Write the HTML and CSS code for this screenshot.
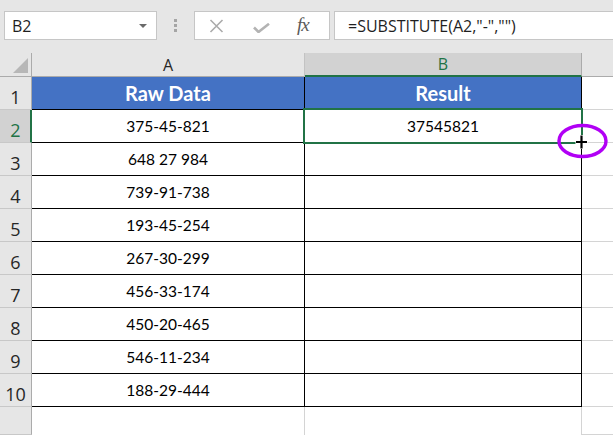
FILE: index.html
```html
<!DOCTYPE html>
<html>
<head>
<meta charset="utf-8">
<link rel="stylesheet" href="styles.css">
</head>
<body>
<div class="toolbar">
  <div class="namebox"><span>B2</span><i class="caret"></i></div>
  <div class="grip"><i></i><i></i><i></i></div>
  <div class="fxbox">
    <svg class="ico-x" width="15" height="14" viewBox="0 0 15 14"><path d="M1.5 1 L13.5 13 M13.5 1 L1.5 13" stroke="#ababab" stroke-width="1.6" fill="none"/></svg>
    <svg class="ico-ok" width="17" height="10" viewBox="0 0 17 10"><path d="M1 4.5 L5.5 9 L16 0.8" stroke="#b3b3b3" stroke-width="2.6" fill="none"/></svg>
    <span class="fx">fx</span>
  </div>
  <div class="formula">=SUBSTITUTE(A2,"-","")</div>
</div>
<div class="sheet">
  <div class="corner"><i></i></div>
  <div class="colh">A</div>
  <div class="colh sel">B</div>
  <div class="colh last"></div>

  <div class="rowh">1</div>
  <div class="cell head">Raw Data</div>
  <div class="cell head">Result</div>
  <div class="cell out"></div>

  <div class="rowh sel">2</div>
  <div class="cell">375-45-821</div>
  <div class="cell">37545821</div>
  <div class="cell out"></div>

  <div class="rowh">3</div>
  <div class="cell">648 27 984</div>
  <div class="cell"></div>
  <div class="cell out"></div>

  <div class="rowh">4</div>
  <div class="cell">739-91-738</div>
  <div class="cell"></div>
  <div class="cell out"></div>

  <div class="rowh">5</div>
  <div class="cell">193-45-254</div>
  <div class="cell"></div>
  <div class="cell out"></div>

  <div class="rowh">6</div>
  <div class="cell">267-30-299</div>
  <div class="cell"></div>
  <div class="cell out"></div>

  <div class="rowh">7</div>
  <div class="cell">456-33-174</div>
  <div class="cell"></div>
  <div class="cell out"></div>

  <div class="rowh">8</div>
  <div class="cell">450-20-465</div>
  <div class="cell"></div>
  <div class="cell out"></div>

  <div class="rowh">9</div>
  <div class="cell">546-11-234</div>
  <div class="cell"></div>
  <div class="cell out"></div>

  <div class="rowh">10</div>
  <div class="cell">188-29-444</div>
  <div class="cell"></div>
  <div class="cell out"></div>

  <div class="rowh"></div>
  <div class="cell empty"></div>
  <div class="cell empty"></div>
  <div class="cell out"></div>

  <div class="selection"></div>
  <svg class="cursor" width="58" height="42" viewBox="0 0 58 42">
    <ellipse cx="27.5" cy="20" rx="23.5" ry="15.5" fill="none" stroke="#b100f5" stroke-width="3.4"/>
    <path d="M26.5 14 V28 M20.5 21 H32.5" stroke="#fff" stroke-width="4.5" fill="none"/>
    <path d="M26.5 14.5 V27.5 M21 21 H32" stroke="#000" stroke-width="2.2" fill="none"/>
  </svg>
</div>
</body>
</html>
```
FILE: styles.css
```css
* { box-sizing: border-box; }
html, body { margin: 0; padding: 0; }
body {
  width: 613px;
  height: 435px;
  overflow: hidden;
  background: #ffffff;
  font-family: "Open Sans", "Noto Sans", sans-serif;
}

.toolbar {
  height: 53px;
  background: #e6e6e6;
  display: flex;
  align-items: flex-start;
  padding: 11px 0 0 4px;
}
.namebox {
  width: 153px;
  height: 29px;
  background: #ffffff;
  border: 1px solid #c6c6c6;
  display: flex;
  align-items: center;
  padding-left: 7px;
  padding-right: 9px;
  font-size: 16px;
  color: #1f1f1f;
}
.namebox span { flex: 1; }
.caret {
  width: 0;
  height: 0;
  border-left: 4px solid transparent;
  border-right: 4px solid transparent;
  border-top: 4px solid #6a6a6a;
}
.grip {
  margin-left: 17px;
  margin-top: 8px;
  display: flex;
  flex-direction: column;
  gap: 2px;
}
.grip i {
  display: block;
  width: 3px;
  height: 3px;
  background: #a5a5a5;
}
.fxbox {
  margin-left: 17px;
  width: 136px;
  height: 29px;
  background: #ffffff;
  border: 1px solid #c6c6c6;
  display: flex;
  align-items: center;
  padding-left: 14px;
}
.ico-x { margin-top: 1px; }
.ico-ok { margin-left: 29px; margin-top: 5px; }
.fx {
  margin-left: 27px;
  font-family: "Liberation Serif", "DejaVu Serif", serif;
  font-style: italic;
  font-size: 19px;
  color: #5a5a5a;
  letter-spacing: -1px;
  margin-top: -1px;
}
.formula {
  margin-left: 4px;
  flex: 1;
  height: 29px;
  background: #ffffff;
  border: 1px solid #c6c6c6;
  border-right: none;
  padding-left: 13px;
  display: flex;
  align-items: center;
  font-size: 16px;
  color: #1f1f1f;
}

.sheet {
  position: relative;
  display: grid;
  grid-template-columns: 32px 273px 277px 31px;
  grid-template-rows: 24px repeat(10, 33px) 28px;
}
.corner {
  background: #e6e6e6;
  border-right: 1px solid #ababab;
  border-bottom: 1px solid #ababab;
  display: flex;
  justify-content: flex-end;
  align-items: flex-end;
  padding: 0 3px 3px 0;
}
.corner i {
  width: 0;
  height: 0;
  border-left: 15px solid transparent;
  border-bottom: 15px solid #b7b7b7;
}
.colh {
  background: #e6e6e6;
  border-right: 1px solid #c3c3c3;
  border-bottom: 1px solid #ababab;
  display: flex;
  align-items: center;
  justify-content: center;
  font-size: 16px;
  color: #262626;
}
.colh.sel {
  background: #d2d2d2;
  color: #217346;
  border-right-color: #ababab;
  border-bottom: 2px solid #217346;
}
.colh.last { border-right: none; }
.rowh {
  background: #e6e6e6;
  border-right: 1px solid #ababab;
  border-bottom: 1px solid #c8c8c8;
  text-align: center;
  padding-top: 11px;
  font-size: 18px;
  line-height: 18px;
  color: #262626;
}
.rowh.sel {
  background: #d2d2d2;
  color: #217346;
  border-right: 2px solid #217346;
  padding-left: 1px;
}
.cell {
  border-right: 1px solid #000;
  border-bottom: 1px solid #000;
  display: flex;
  align-items: center;
  justify-content: center;
  font-family: "Lato", "Open Sans", sans-serif;
  font-size: 15.5px;
  color: #000;
  background: #fff;
}
.cell.head {
  background: #4472c4;
  color: #ffffff;
  font-weight: bold;
  font-size: 20px;
}
.cell.out {
  border-right: none;
  border-bottom: 1px solid #d4d4d4;
}
.cell.empty {
  border-right: 1px solid #d4d4d4;
  border-bottom: none;
}

.selection {
  position: absolute;
  left: 303px;
  top: 55px;
  width: 280px;
  height: 36px;
  border: 2px solid #217346;
  pointer-events: none;
}
.cursor {
  position: absolute;
  left: 555px;
  top: 68px;
}
```
